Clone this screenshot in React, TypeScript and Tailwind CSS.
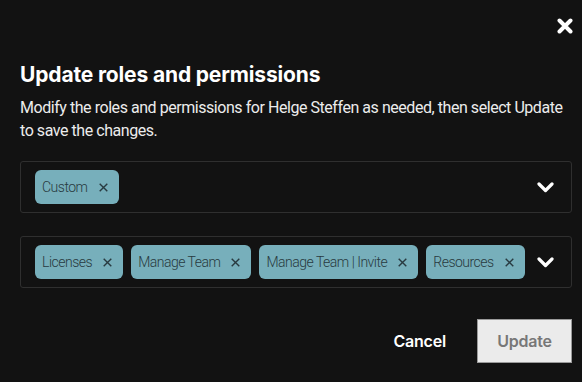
function CloseIcon() {
  return (
    <svg width="16" height="16" viewBox="0 0 16 16" className="text-white">
      <path d="M2.5 2.5 L13.5 13.5 M13.5 2.5 L2.5 13.5" stroke="currentColor" strokeWidth="4" strokeLinecap="round" />
    </svg>
  )
}

function SmallX() {
  return (
    <svg width="9" height="9" viewBox="0 0 9 9" className="ml-[11px] shrink-0">
      <path d="M0.7 0.7 L8.3 8.3 M8.3 0.7 L0.7 8.3" stroke="currentColor" strokeWidth="1.4" />
    </svg>
  )
}

function Chevron() {
  return (
    <svg width="17" height="11" viewBox="0 0 17 11" className="text-white shrink-0">
      <path d="M2 2 L8.5 8.5 L15 2" stroke="currentColor" strokeWidth="3.2" fill="none" strokeLinecap="round" strokeLinejoin="round" />
    </svg>
  )
}

function Chip({ label }: { label: string }) {
  return (
    <div
      className="flex items-center h-[34px] pl-[7px] pr-[11px] rounded-[6px] bg-[#77afbb] text-[#283a40] text-[14px] font-light tracking-[-0.5px] whitespace-nowrap"
      style={{ fontFamily: 'Roboto, "Liberation Sans", sans-serif' }}
    >
      <span>{label}</span>
      <SmallX />
    </div>
  )
}

function MultiSelect({ values }: { values: string[] }) {
  return (
    <div className="flex items-center h-[52px] pl-[14px] pr-[17px] border border-[#2f2f2f] rounded-[3px]">
      <div className="flex flex-1 gap-[8px]">
        {values.map((v) => (
          <Chip key={v} label={v} />
        ))}
      </div>
      <Chevron />
    </div>
  )
}

export default function App() {
  return (
    <div
      className="w-[582px] h-[382px] bg-[#121212] text-white pl-[20px] pr-[10px] pt-[18px] overflow-hidden"
      style={{ fontFamily: 'Inter, "Liberation Sans", sans-serif' }}
    >
      <div className="flex justify-end mr-[-1px]">
        <CloseIcon />
      </div>
      <h1 className="mt-[27px] text-[21px] font-bold tracking-[-0.15px] leading-[28px]">
        Update roles and permissions
      </h1>
      <p
        className="mt-[7px] text-[16px] leading-[23px] text-[#ececec] tracking-[-0.45px]"
        style={{ fontFamily: 'Roboto, "Liberation Sans", sans-serif' }}
      >
        Modify the roles and permissions for Helge Steffen as needed, then select Update to save the changes.
      </p>
      <div className="mt-[19px] flex flex-col gap-[23px]">
        <MultiSelect values={['Custom']} />
        <MultiSelect values={['Licenses', 'Manage Team', 'Manage Team | Invite', 'Resources']} />
      </div>
      <div className="mt-[31px] flex justify-end items-center gap-[31px]">
        <button className="h-[44px] text-[16px] font-semibold text-white tracking-[-0.2px]">Cancel</button>
        <button className="w-[95px] h-[44px] bg-[#ebebeb] border border-[#9a9a9a] text-[16px] font-semibold text-[#777777] tracking-[-0.2px]">
          Update
        </button>
      </div>
    </div>
  )
}
